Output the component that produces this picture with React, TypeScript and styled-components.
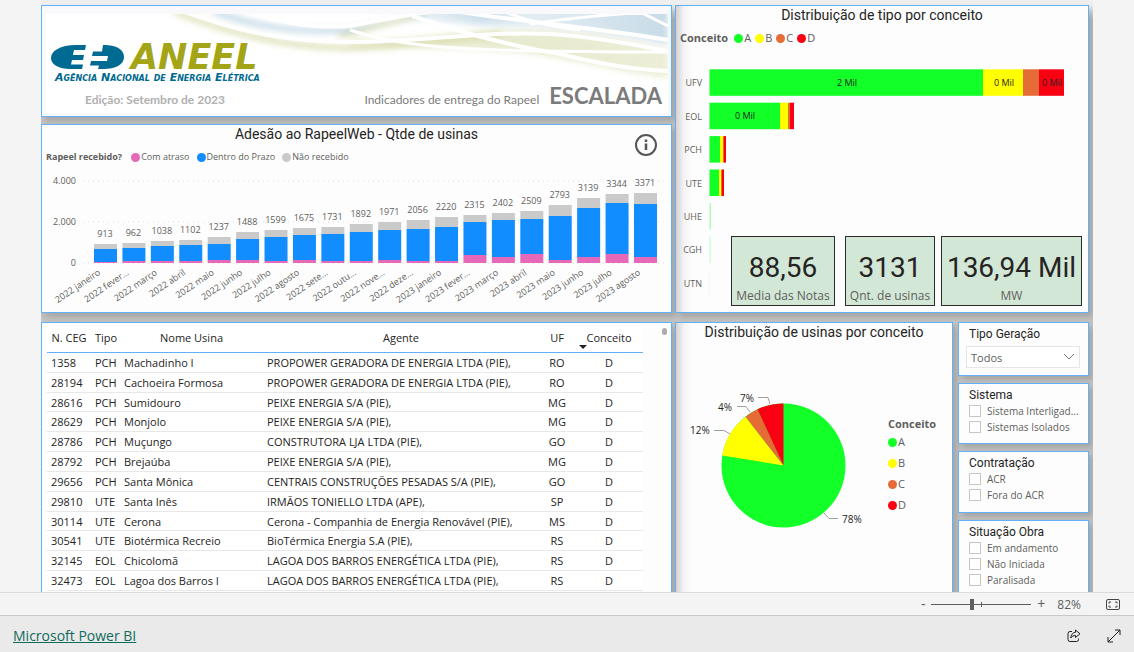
import React from "react";
import styled, { createGlobalStyle } from "styled-components";

const GlobalStyle = createGlobalStyle`
  *, *::before, *::after { box-sizing: border-box; }
  body {
    margin: 0;
    background: #f4f4f4;
    color: #252423;
    font-family: "Open Sans", "Noto Sans", sans-serif;
    font-size: 11px;
  }
`;

const BLUE_LINE = "#62b0f8";
const GREEN = "#12ff28";
const YELLOW = "#ffff00";
const ORANGE = "#e66c37";
const RED = "#f90013";

const Page = styled.div`
  display: flex;
  flex-direction: column;
  height: 100vh;
`;

const Viewer = styled.main`
  flex: 1;
  min-height: 0;
  overflow: hidden;
  padding-left: 41px;
  padding-right: 41px;
`;

const Board = styled.div`
  display: grid;
  grid-template-columns: minmax(0, 631fr) minmax(0, 414fr);
  column-gap: 3px;
  row-gap: 9px;
  padding: 5px 4px 0 0;
  overflow: hidden;
  background: linear-gradient(#efefef 5px, #c4c4c4 20px);
`;

const LeftColumn = styled.div`
  display: grid;
  grid-template-rows: 112px 189px;
  row-gap: 7px;
`;

const BottomRight = styled.div`
  display: grid;
  grid-template-columns: minmax(0, 278fr) minmax(0, 131fr);
  column-gap: 5px;
`;

const Panel = styled.section<{ $shade?: boolean }>`
  position: relative;
  min-width: 0;
  border: 1px solid ${BLUE_LINE};
  background: ${(p) =>
    p.$shade ? "linear-gradient(90deg, #d2d2d2, #f4f4f4 8px, #fdfdfd 16px)" : "#fdfdfd"};
  box-shadow: 4px 4px 6px rgba(0, 0, 0, 0.16);
`;

const PanelTitle = styled.h2`
  margin: 0;
  padding-top: 1px;
  font: 400 14px/16px Roboto, sans-serif;
  text-align: center;
  color: #252423;
`;

const Chart = styled.svg`
  display: block;
  width: 100%;
  font-family: "Open Sans", sans-serif;
`;

/* Banner */

const Banner = styled(Panel)`
  padding: 8px 3px 3px 4px;
  background: #f9f8fa;
`;

const BannerInner = styled.div`
  position: relative;
  height: 100%;
  overflow: hidden;
  background: #fff;
`;

const Waves = styled.svg`
  position: absolute;
  top: 0;
  right: 0;
`;

const BannerContent = styled.div`
  position: relative;
  display: flex;
  flex-direction: column;
  justify-content: space-between;
  height: 100%;
  padding: 26px 6px 5px 4px;
  font-family: Lato, sans-serif;
`;

const LogoMark = styled.svg`
  flex: none;
  overflow: visible;
`;

const LogoCaption = styled.text`
  font: italic 700 11px "DejaVu Sans", sans-serif;
  font-variant: small-caps;
`;

const BannerLine = styled.div`
  display: flex;
  align-items: baseline;
  color: #7b7b7b;
`;

const Edition = styled.span`
  flex: 1;
  padding-left: 35px;
  font-size: 12px;
  font-weight: 700;
  color: #b0b0b0;
`;

const Subtitle = styled.span`
  font-size: 12px;
  margin-right: 10px;
`;

const Escalada = styled.h1`
  margin: 0;
  font-size: 22px;
  line-height: 24px;
  font-weight: 700;
`;

/* Legends */

const Legend = styled.div<{ $vertical?: boolean; $gap?: number }>`
  display: flex;
  flex-direction: ${(p) => (p.$vertical ? "column" : "row")};
  align-items: ${(p) => (p.$vertical ? "flex-start" : "center")};
  gap: ${(p) => p.$gap ?? 5}px;
  line-height: 16px;
  color: #605e5c;
`;

const LegendTitle = styled.strong<{ $size: number }>`
  font-size: ${(p) => p.$size}px;
  font-weight: 700;
  margin-right: 2px;
`;

const LegendItem = styled.span<{ $color: string; $size: number }>`
  display: flex;
  align-items: center;
  gap: 1px;
  font-size: ${(p) => p.$size}px;
  &::before {
    content: "";
    width: 9px;
    height: 9px;
    border-radius: 50%;
    background: ${(p) => p.$color};
  }
`;

const ChartLegend = styled(Legend)`
  padding: 7px 4px 0;
`;

const InfoButton = styled.button`
  position: absolute;
  top: 8px;
  right: 13px;
  width: 24px;
  height: 24px;
  padding: 0;
  border: 0;
  background: none;
`;

/* KPI cards */

const Kpis = styled.div`
  position: absolute;
  right: 6px;
  bottom: 6px;
  display: grid;
  grid-template-columns: 114px 96px 141px;
  align-items: end;
`;

const Kpi = styled.div<{ $width: number }>`
  width: ${(p) => p.$width}px;
  height: 70px;
  padding-top: 12px;
  border: 1px solid #2b2b2b;
  background: #d3e7d7;
  text-align: center;
`;

const KpiValue = styled.div`
  font: 400 28px/38px Roboto, sans-serif;
`;

const KpiLabel = styled.div`
  font-size: 12px;
  line-height: 18px;
  color: #605e5c;
`;

/* Table */

const TablePanel = styled(Panel)`
  padding: 4px 28px 0 5px;
  background: #fdfdfd;
`;

const ScrollThumb = styled.span`
  position: absolute;
  top: 5px;
  right: 4px;
  width: 5px;
  height: 7px;
  border-radius: 3px;
  background: #adadad;
`;

const Table = styled.table`
  width: 100%;
  height: 264px;
  border-collapse: separate;
  border-spacing: 0;
  table-layout: fixed;
  background: #fff;
  font-size: 11px;
  white-space: nowrap;
`;

const Th = styled.th`
  position: relative;
  height: 26px;
  padding: 0 4px 5px;
  border-bottom: 1px solid ${BLUE_LINE};
  font-weight: 400;
  text-align: center;
`;

const SortMark = styled.span`
  position: absolute;
  left: 4px;
  bottom: 3px;
  border: 4px solid transparent;
  border-bottom-width: 0;
  border-top-color: #252423;
`;

const Td = styled.td<{ $center?: boolean }>`
  height: 19px;
  padding: 1px 4px 0;
  line-height: 16px;
  border-bottom: 1px solid #e8e8e8;
  text-align: ${(p) => (p.$center ? "center" : "left")};
`;

/* Pie */

const PieBody = styled.div`
  display: flex;
  align-items: flex-start;
`;

const PieChart = styled.svg`
  flex: 1;
  min-width: 0;
  font-family: "Open Sans", sans-serif;
`;

const PieLegend = styled(Legend)`
  width: 64px;
  margin-top: 78px;
  > strong {
    line-height: 11px;
  }
`;

/* Slicers */

const Slicers = styled.div`
  display: grid;
  grid-template-rows: 54px 61px 62px 84px;
  row-gap: 7px;
`;

const Slicer = styled(Panel)`
  padding: 3px 8px 0 10px;
`;

const SlicerTitle = styled.h3`
  margin: 0;
  font: 400 12px/16px Roboto, sans-serif;
`;

const Select = styled.select`
  appearance: none;
  display: block;
  width: calc(100% + 3px);
  height: 22px;
  margin: 4px 0 0 -3px;
  padding: 0 4px;
  border: 1px solid #e6e6e6;
  background: #fff
    url("data:image/svg+xml,%3Csvg xmlns='http://www.w3.org/2000/svg' width='12' height='8' fill='none' stroke='%23777'%3E%3Cpath d='M1 1l5 5 5-5'/%3E%3C/svg%3E")
    no-repeat right 4px center;
  color: #605e5c;
  font: 11px "Open Sans", sans-serif;
`;

const Option = styled.label`
  display: flex;
  align-items: center;
  gap: 6px;
  height: 16px;
  font-size: 10px;
  white-space: nowrap;
  color: #605e5c;
`;

const Check = styled.input`
  appearance: none;
  flex: none;
  width: 12px;
  height: 12px;
  margin: 0;
  border: 1px solid #c8c6c4;
  background: #fff;
`;

/* Bottom bars */

const ZoomBar = styled.div`
  display: flex;
  align-items: center;
  justify-content: flex-end;
  height: 23px;
  padding-right: 13px;
  border-top: 1px solid #dcdcdc;
  background: #f4f4f4;
  color: #605e5c;
`;

const PlainButton = styled.button`
  display: flex;
  align-items: center;
  justify-content: center;
  width: 16px;
  height: 20px;
  padding: 0;
  border: 0;
  background: none;
  color: inherit;
  font: 14px/16px "Open Sans", sans-serif;
`;

const Range = styled.input`
  appearance: none;
  width: 100px;
  height: 12px;
  margin: 0 2px 0 0;
  background:
    linear-gradient(#605e5c, #605e5c) 50px center / 1px 5px no-repeat,
    linear-gradient(#605e5c, #605e5c) center / 100% 1px no-repeat;
  &::-webkit-slider-thumb {
    appearance: none;
    width: 4px;
    height: 11px;
    background: #605e5c;
  }
`;

const ZoomValue = styled.span`
  margin: 0 24px 0 8px;
  font-size: 12px;
`;

const Footer = styled.footer`
  display: flex;
  align-items: center;
  gap: 24px;
  height: 37px;
  padding: 3px 12px 0 13px;
  border-top: 1px solid #c8c8c8;
  background: #eaeaea;
`;

const BrandLink = styled.a`
  margin-right: auto;
  font-size: 14px;
  color: #0f6b5c;
`;

const months: [string, number, number, number, number][] = [
  ["2022 janeiro", 913, 244, 249, 262],
  ["2022 fever...", 962, 243, 248, 261],
  ["2022 março", 1038, 241, 246, 261],
  ["2022 abril", 1102, 240, 245, 261],
  ["2022 maio", 1237, 237, 244, 260],
  ["2022 junho", 1488, 232, 239, 260],
  ["2022 julho", 1599, 230, 237, 261],
  ["2022 agosto", 1675, 228, 235, 260],
  ["2022 sete...", 1731, 227, 234, 261],
  ["2022 outu...", 1892, 224, 232, 261],
  ["2022 nove...", 1971, 222, 230, 260],
  ["2022 deze...", 2056, 220, 229, 261],
  ["2023 janeiro", 2220, 217, 227, 261],
  ["2023 fever...", 2315, 215, 222, 255],
  ["2023 março", 2402, 213, 220, 257],
  ["2023 abril", 2509, 211, 219, 254],
  ["2023 maio", 2793, 205, 216, 260],
  ["2023 junho", 3139, 198, 208, 257],
  ["2023 julho", 3344, 194, 203, 254],
  ["2023 agosto", 3371, 193, 204, 257],
];

const types: { name: string; ends: number[]; fade?: number }[] = [
  { name: "UFV", ends: [983, 1023, 1039, 1064] },
  { name: "EOL", ends: [780, 788, 790, 794] },
  { name: "PCH", ends: [720, 723, 724, 726] },
  { name: "UTE", ends: [719, 721, 722, 724] },
  { name: "UHE", ends: [711], fade: 0.35 },
  { name: "CGH", ends: [711], fade: 0.18 },
  { name: "UTN", ends: [710], fade: 0.1 },
];

const conceptColors = [GREEN, YELLOW, ORANGE, RED];
const conceptNames = ["A", "B", "C", "D"];

const plants = [
  ["1358", "PCH", "Machadinho I", "PROPOWER GERADORA DE ENERGIA LTDA (PIE),", "RO"],
  ["28194", "PCH", "Cachoeira Formosa", "PROPOWER GERADORA DE ENERGIA LTDA (PIE),", "RO"],
  ["28616", "PCH", "Sumidouro", "PEIXE ENERGIA S/A (PIE),", "MG"],
  ["28629", "PCH", "Monjolo", "PEIXE ENERGIA S/A (PIE),", "MG"],
  ["28786", "PCH", "Muçungo", "CONSTRUTORA LJA LTDA (PIE),", "GO"],
  ["28792", "PCH", "Brejaúba", "PEIXE ENERGIA S/A (PIE),", "MG"],
  ["29656", "PCH", "Santa Mônica", "CENTRAIS CONSTRUÇÕES PESADAS S/A (PIE),", "GO"],
  ["29810", "UTE", "Santa Inês", "IRMÃOS TONIELLO LTDA (APE),", "SP"],
  ["30114", "UTE", "Cerona", "Cerona - Companhia de Energia Renovável (PIE),", "MS"],
  ["30541", "UTE", "Biotérmica Recreio", "BioTérmica Energia S.A (PIE),", "RS"],
  ["32145", "EOL", "Chicolomã", "LAGOA DOS BARROS ENERGÉTICA LTDA (PIE),", "RS"],
  ["32473", "EOL", "Lagoa dos Barros I", "LAGOA DOS BARROS ENERGÉTICA LTDA (PIE),", "RS"],
];

function Logo() {
  return (
    <LogoMark width="210" height="44" viewBox="50 40 210 44" role="img" aria-label="ANEEL">
      <path
        fill="#006b92"
        d="M86 45 H76 C60 45 51 51 51 58 C51 65 60 69.500 72 69 H82 L83 64.500 H71 L72 60 H83 L84 55 H73 L74 50 H85 Z"
      />
      <path
        fill="#006b92"
        d="M103 45 H106 C119 45.500 124 51 124 57 C124 65 115 69 104 69 H98 L99 65.500 H90 L91 61 H107 L108 56 H92 L93 51.500 H102 Z"
      />
      <text x="131" y="69" fill="#a3a516" fontSize="35" fontWeight="700" fontStyle="italic" fontFamily="DejaVu Sans">
        ANEEL
      </text>
      <LogoCaption x="55" y="81" fill="#00698f">
        Agência Nacional de Energia Elétrica
      </LogoCaption>
    </LogoMark>
  );
}

function BannerWaves() {
  return (
    <Waves width="500" height="80" viewBox="168 14 500 80" aria-hidden="true">
      <defs>
        <filter id="soft" x="-10%" y="-30%" width="120%" height="160%">
          <feGaussianBlur stdDeviation="3" />
        </filter>
        <linearGradient id="olive" x1="0" x2="1">
          <stop offset="0" stopColor="#d8dcae" stopOpacity="0.500" />
          <stop offset="0.500" stopColor="#d8dcae" stopOpacity="0.600" />
          <stop offset="1" stopColor="#d8dcae" stopOpacity="0.500" />
        </linearGradient>
        <linearGradient id="sky" x1="0" x2="1">
          <stop offset="0" stopColor="#b9d2e2" stopOpacity="0.200" />
          <stop offset="0.300" stopColor="#b9d2e2" stopOpacity="0.700" />
          <stop offset="0.500" stopColor="#b9d2e2" stopOpacity="0.400" />
          <stop offset="1" stopColor="#b9d2e2" stopOpacity="0.800" />
        </linearGradient>
      </defs>
      <g filter="url(#soft)">
        <path fill="url(#olive)" d="M350 38 C400 44 470 30 530 30 C600 32 640 44 668 50 V78 C610 70 570 58 520 52 C440 46 400 48 350 46 Z" />
        <path fill="url(#sky)" d="M400 8 H668 V44 C620 34 570 26 500 26 C460 24 430 20 400 18 Z" />
      </g>
      <g filter="url(#soft)" fill="none" strokeLinecap="round">
        <path stroke="#d2d69c" strokeWidth="4" d="M175 12 C230 34 290 48 350 48 C400 47 450 38 500 34" />
        <path stroke="#b0cddf" strokeWidth="4" d="M215 12 C260 28 300 33 350 30 C380 26 400 20 425 14" />
        <path stroke="#d2d69c" strokeWidth="3" d="M340 36 C380 26 400 20 420 14" />
      </g>
      <g fill="none" stroke="#fff" strokeWidth="4">
        <path d="M185 12 C240 32 290 43 360 42 C430 41 480 31 550 34 C600 37 640 46 668 51" />
        <path d="M240 10 C290 26 320 28 350 26 C380 20 400 16 430 12" />
        <path d="M412 16 C460 32 510 46 560 54 C600 64 640 70 668 71" />
        <path d="M460 12 C540 24 600 28 668 40" />
        <path strokeWidth="3" d="M350 30 C380 40 420 48 500 50 C560 52 610 52 668 52" />
        <path strokeWidth="3" d="M530 24 C570 18 610 14 650 12 M640 12 L668 26" />
        <path strokeWidth="3" d="M505 12 C530 22 550 26 580 30" />
      </g>
    </Waves>
  );
}

function AdoptionChart() {
  return (
    <Chart viewBox="42 165 629 146" role="img" aria-label="Adesão ao RapeelWeb por mês">
      <g stroke="#dedede" strokeDasharray="1 4">
        {[181, 222, 263].map((y) => (
          <line key={y} x1="83" x2="668" y1={y} y2={y} />
        ))}
      </g>
      <g fontSize="9" fill="#605e5c" textAnchor="end">
        <text x="76" y="184">4.000</text>
        <text x="76" y="225">2.000</text>
        <text x="76" y="266">0</text>
      </g>
      {months.map(([label, total, top, onTime, late], i) => {
        const x = 94 + i * 28.42;
        return (
          <g key={label} fontSize="9">
            <rect x={x} y={top} width="23" height={onTime - top} fill="#cacaca" />
            <rect x={x} y={onTime} width="23" height={late - onTime} fill="#118dff" />
            <rect x={x} y={late} width="23" height={263 - late} fill="#e669b9" />
            <text x={x + 11} y={top - 7} textAnchor="middle" fill="#605e5c">
              {total}
            </text>
            <text transform={`translate(${x + 7} 274) rotate(-34)`} textAnchor="end" fill="#605e5c">
              {label}
            </text>
          </g>
        );
      })}
    </Chart>
  );
}

function TypeChart() {
  return (
    <Chart viewBox="676 46 412 260" role="img" aria-label="Distribuição de tipo por conceito">
      {types.map(({ name, ends, fade }, i) => {
        const y = 69.3 + i * 33.4;
        return (
          <g key={name} fontSize="9">
            <text x="702" y={y + 17} textAnchor="end" fill="#605e5c">
              {name}
            </text>
            {ends.map((end, k) => {
              const start = k === 0 ? 709.5 : ends[k - 1];
              return (
                <rect
                  key={end}
                  x={start}
                  y={y}
                  width={end - start}
                  height="26.500"
                  fill={conceptColors[k]}
                  opacity={fade ?? 1}
                />
              );
            })}
          </g>
        );
      })}
      <g fontSize="9" fill="#252423" textAnchor="middle">
        <text x="847" y="86">2 Mil</text>
        <text x="1004" y="86">0 Mil</text>
        <text x="1052" y="86">0 Mil</text>
        <text x="745" y="119">0 Mil</text>
      </g>
    </Chart>
  );
}

function Pie() {
  return (
    <PieChart viewBox="676 340 212 220" role="img" aria-label="Distribuição de usinas por conceito">
      <circle cx="783.500" cy="465.500" r="62" fill={GREEN} />
      <path fill={YELLOW} d="M783.500 465.500 L722.200 455.500 A62 62 0 0 1 745.500 416.700 Z" />
      <path fill={ORANGE} d="M783.500 465.500 L745.500 416.700 A62 62 0 0 1 757.500 409.200 Z" />
      <path fill={RED} d="M783.500 465.500 L757.500 409.200 A62 62 0 0 1 783.500 403.500 Z" />
      <g fill="none" stroke="#a0a0a0">
        <path d="M758 397.500 H768 L770 404" />
        <path d="M737 406.500 H746 L750 412" />
        <path d="M714 430.500 H724 L730 434" />
        <path d="M824 513 L829 518.500 H838" />
      </g>
      <g fontSize="10" fill="#252423">
        <text x="740" y="402">7%</text>
        <text x="718" y="411">4%</text>
        <text x="690" y="434">12%</text>
        <text x="842" y="523">78%</text>
      </g>
    </PieChart>
  );
}

function Slice({ title, options }: { title: string; options: string[] }) {
  return (
    <Slicer>
      <SlicerTitle>{title}</SlicerTitle>
      {options.map((o) => (
        <Option key={o}>
          <Check type="checkbox" />
          {o}
        </Option>
      ))}
    </Slicer>
  );
}

export default function App() {
  return (
    <Page>
      <GlobalStyle />
      <Viewer>
        <Board>
          <LeftColumn>
            <Banner>
              <BannerInner>
                <BannerWaves />
                <BannerContent>
                  <Logo />
                  <BannerLine>
                    <Edition>Edição: Setembro de 2023</Edition>
                    <Subtitle>Indicadores de entrega do Rapeel</Subtitle>
                    <Escalada>ESCALADA</Escalada>
                  </BannerLine>
                </BannerContent>
              </BannerInner>
            </Banner>
            <Panel>
              <PanelTitle>Adesão ao RapeelWeb - Qtde de usinas</PanelTitle>
              <ChartLegend $gap={7}>
                <LegendTitle $size={9}>Rapeel recebido?</LegendTitle>
                <LegendItem $size={9} $color="#e669b9">Com atraso</LegendItem>
                <LegendItem $size={9} $color="#118dff">Dentro do Prazo</LegendItem>
                <LegendItem $size={9} $color="#cacaca">Não recebido</LegendItem>
              </ChartLegend>
              <AdoptionChart />
              <InfoButton aria-label="Informações">
                <svg width="24" height="24" viewBox="0 0 24 24" fill="none" stroke="#555" strokeWidth="2">
                  <circle cx="12" cy="12" r="10" />
                  <path d="M12 10.500 V17 M12 6.500 V9" strokeWidth="2.500" />
                </svg>
              </InfoButton>
            </Panel>
          </LeftColumn>

          <Panel $shade>
            <PanelTitle>Distribuição de tipo por conceito</PanelTitle>
            <ChartLegend $gap={4}>
              <LegendTitle $size={11}>Conceito</LegendTitle>
              {conceptNames.map((n, i) => (
                <LegendItem key={n} $size={11} $color={conceptColors[i]}>{n}</LegendItem>
              ))}
            </ChartLegend>
            <TypeChart />
            <Kpis>
              <Kpi $width={104}>
                <KpiValue>88,56</KpiValue>
                <KpiLabel>Media das Notas</KpiLabel>
              </Kpi>
              <Kpi $width={90}>
                <KpiValue>3131</KpiValue>
                <KpiLabel>Qnt. de usinas</KpiLabel>
              </Kpi>
              <Kpi $width={141}>
                <KpiValue>136,94 Mil</KpiValue>
                <KpiLabel>MW</KpiLabel>
              </Kpi>
            </Kpis>
          </Panel>

          <TablePanel>
            <Table>
              <colgroup>
                <col style={{ width: "44px" }} />
                <col style={{ width: "29px" }} />
                <col style={{ width: "143px" }} />
                <col />
                <col style={{ width: "36px" }} />
                <col style={{ width: "68px" }} />
              </colgroup>
              <thead>
                <tr>
                  <Th>N. CEG</Th>
                  <Th>Tipo</Th>
                  <Th>Nome Usina</Th>
                  <Th>Agente</Th>
                  <Th>UF</Th>
                  <Th>
                    <SortMark />
                    Conceito
                  </Th>
                </tr>
              </thead>
              <tbody>
                {plants.map(([ceg, tipo, nome, agente, uf]) => (
                  <tr key={ceg}>
                    <Td>{ceg}</Td>
                    <Td>{tipo}</Td>
                    <Td>{nome}</Td>
                    <Td>{agente}</Td>
                    <Td $center>{uf}</Td>
                    <Td $center>D</Td>
                  </tr>
                ))}
              </tbody>
            </Table>
            <ScrollThumb />
          </TablePanel>

          <BottomRight>
            <Panel $shade>
              <PanelTitle>Distribuição de usinas por conceito</PanelTitle>
              <PieBody>
                <Pie />
                <PieLegend $vertical>
                  <LegendTitle $size={11}>Conceito</LegendTitle>
                  {conceptNames.map((n, i) => (
                    <LegendItem key={n} $size={11} $color={conceptColors[i]}>{n}</LegendItem>
                  ))}
                </PieLegend>
              </PieBody>
            </Panel>
            <Slicers>
              <Slicer>
                <SlicerTitle as="label" htmlFor="tipo">Tipo Geração</SlicerTitle>
                <Select id="tipo">
                  <option>Todos</option>
                </Select>
              </Slicer>
              <Slice title="Sistema" options={["Sistema Interligad...", "Sistemas Isolados"]} />
              <Slice title="Contratação" options={["ACR", "Fora do ACR"]} />
              <Slice title="Situação Obra" options={["Em andamento", "Não Iniciada", "Paralisada"]} />
            </Slicers>
          </BottomRight>
        </Board>
      </Viewer>
      <ZoomBar>
        <PlainButton aria-label="Reduzir">-</PlainButton>
        <Range type="range" min="10" max="150" defaultValue="66" aria-label="Zoom" />
        <PlainButton aria-label="Ampliar">+</PlainButton>
        <ZoomValue>82%</ZoomValue>
        <PlainButton aria-label="Ajustar à página">
          <svg width="14" height="11" viewBox="0 0 14 11" fill="none" stroke="#444">
            <rect x="0.500" y="0.500" width="13" height="10" rx="1.500" />
            <path d="M3 4.500 V3 H5 M9 3 H11 V4.500 M11 6.500 V8 H9 M5 8 H3 V6.500" />
          </svg>
        </PlainButton>
      </ZoomBar>
      <Footer>
        <BrandLink href="#">Microsoft Power BI</BrandLink>
        <PlainButton aria-label="Compartilhar">
          <svg width="14" height="14" viewBox="0 0 14 14" fill="none" stroke="#222" strokeLinejoin="round">
            <path d="M5 2.500 H3 A2 2 0 0 0 1 4.500 V10.500 A2 2 0 0 0 3 12.500 H9.500 A2 2 0 0 0 11.500 10.500 V9.500" />
            <path d="M8.500 1 L13 4.800 L8.500 8.500 V6.500 C6.500 6.500 5 7.200 3.800 9 C4 6 5.500 3.500 8.500 3.300 Z" />
          </svg>
        </PlainButton>
        <PlainButton aria-label="Tela inteira">
          <svg width="14" height="14" viewBox="0 0 14 14" fill="none" stroke="#222">
            <path d="M1 13 L13 1 M8 1 H13 V6 M1 8 V13 H6" />
          </svg>
        </PlainButton>
      </Footer>
    </Page>
  );
}
